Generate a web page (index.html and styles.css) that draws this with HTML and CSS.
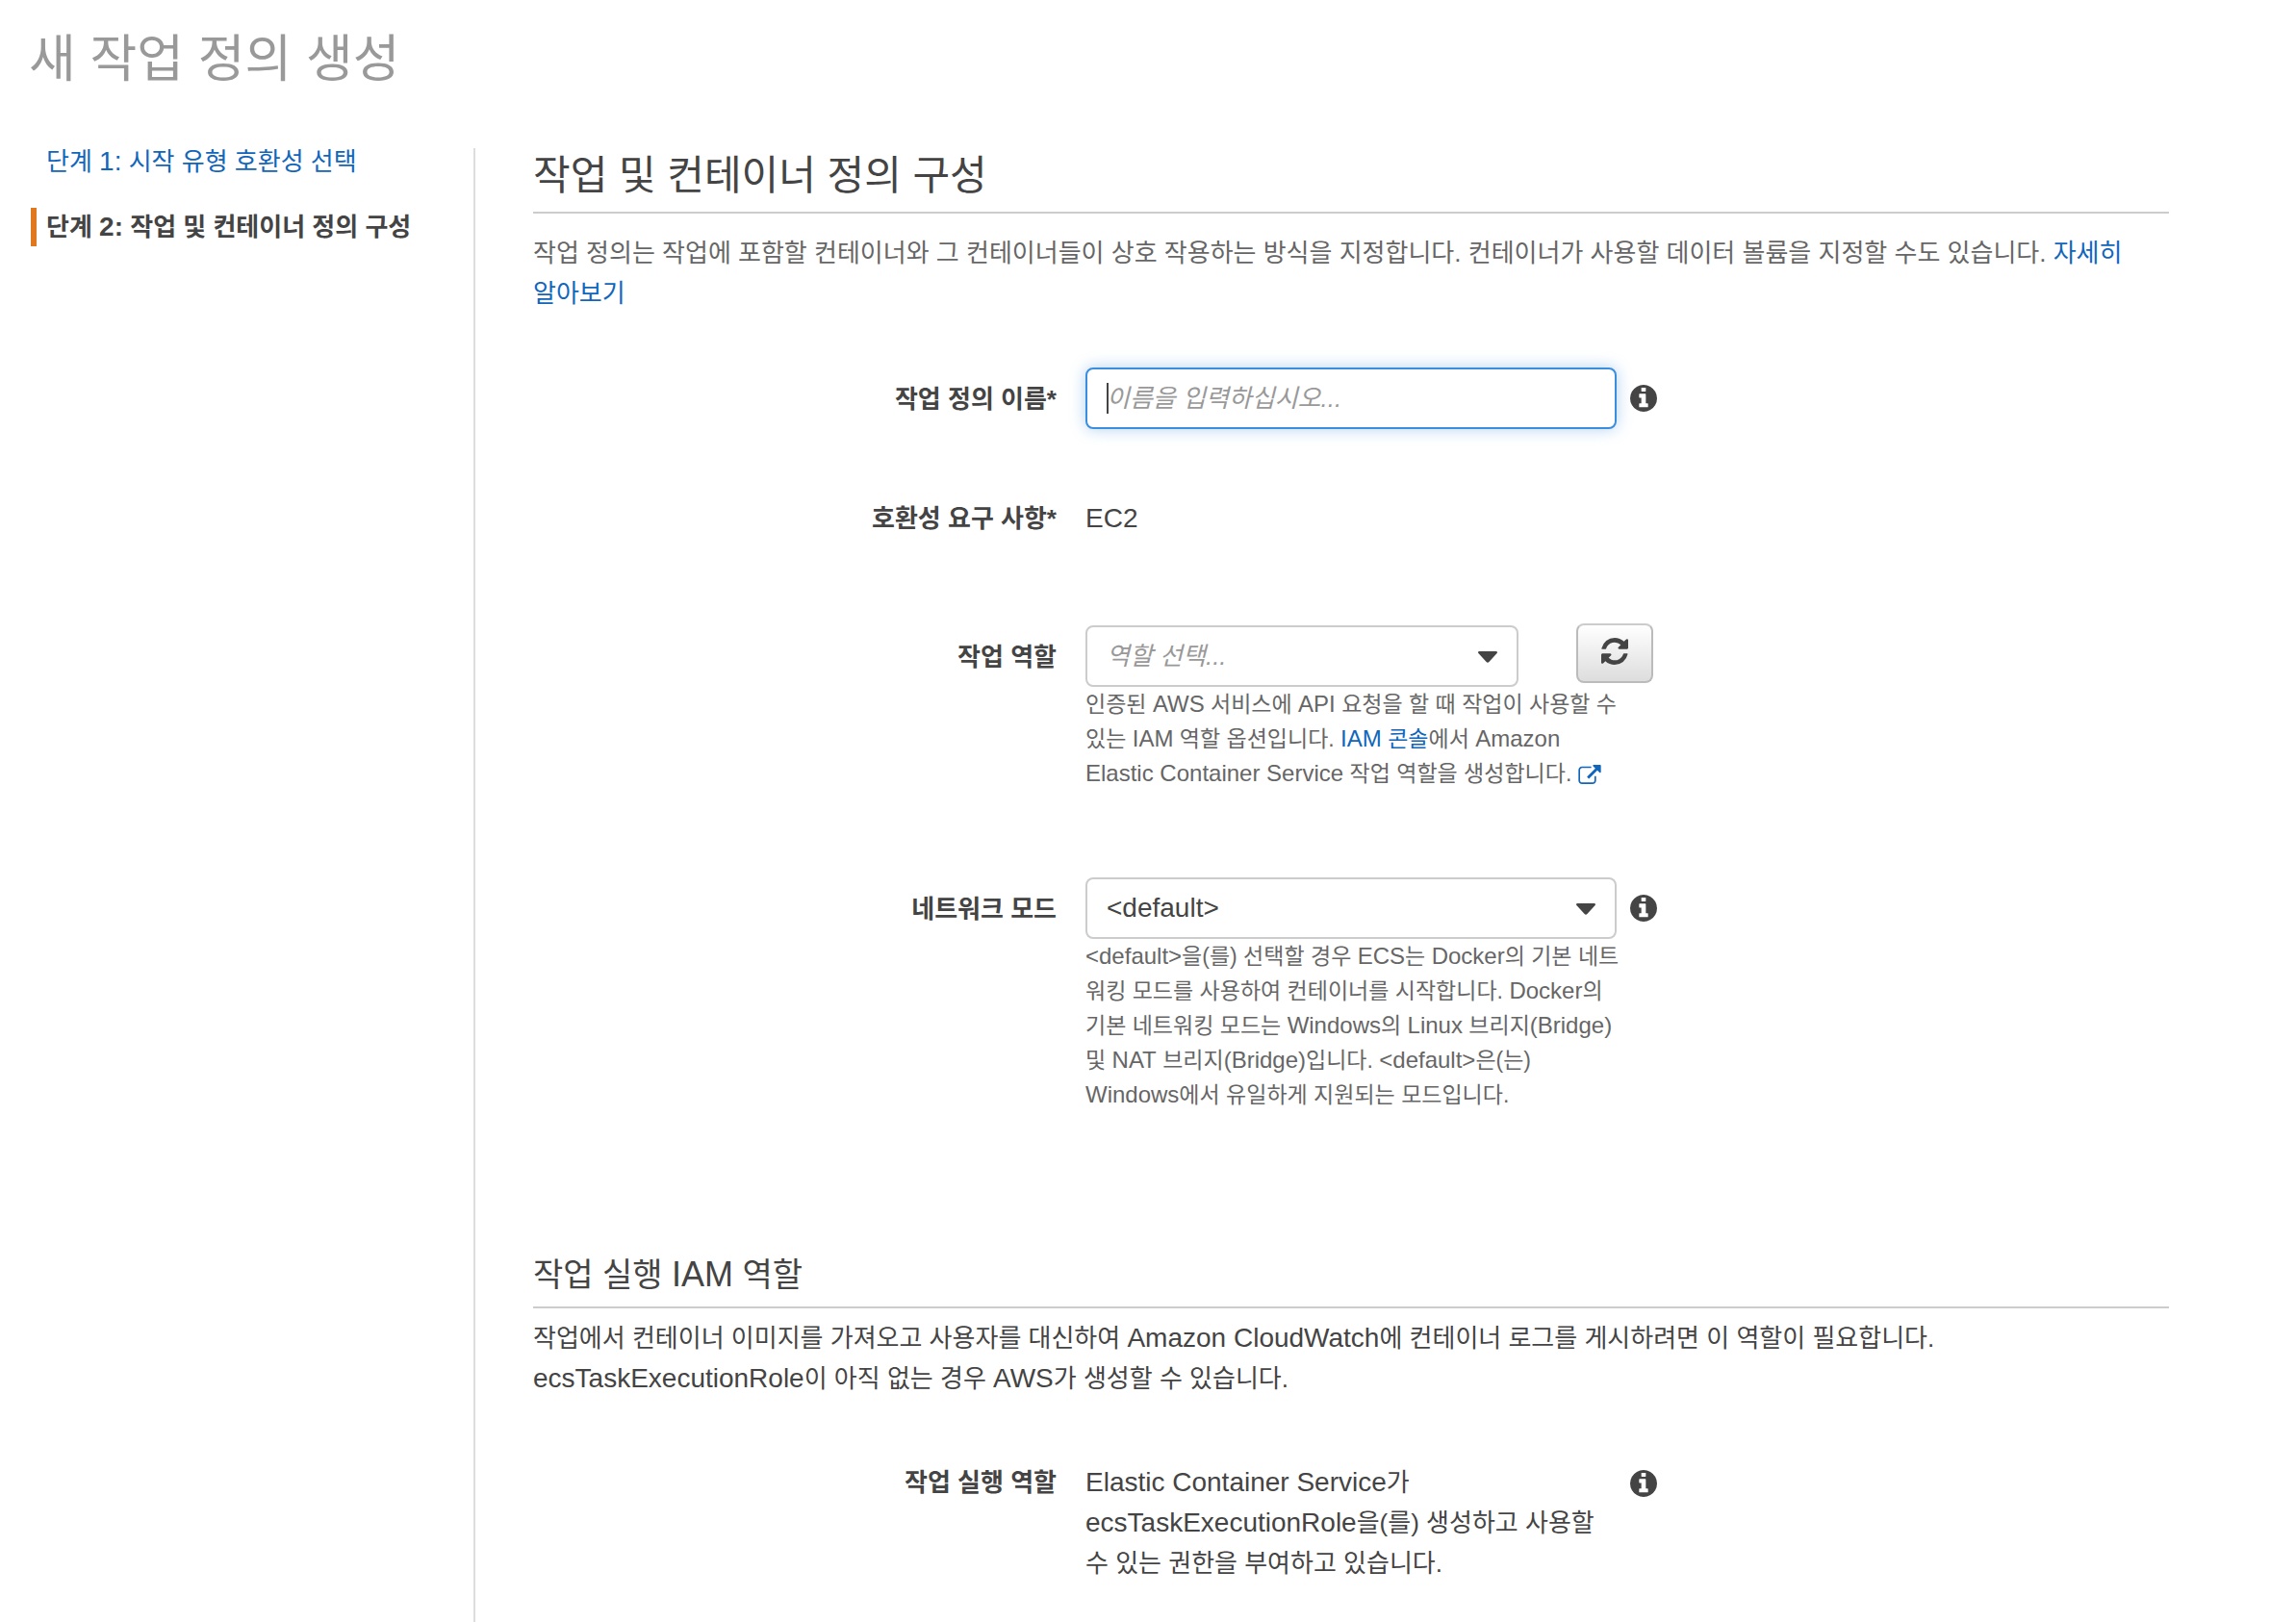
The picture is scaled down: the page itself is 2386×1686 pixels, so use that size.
FILE: index.html
```html
<!DOCTYPE html>
<html lang="ko">
<head>
  <meta charset="utf-8">
  <meta name="viewport" content="width=device-width, initial-scale=1">
  <title>새 작업 정의 생성</title>
  <link rel="stylesheet" href="styles.css">
</head>
<body>
  <svg class="sprite" aria-hidden="true">
    <symbol id="icon-info" viewBox="128 128 1536 1536">
      <path d="M1152 1376v-160q0-14-9-23t-23-9h-96v-512q0-14-9-23t-23-9h-320q-14 0-23 9t-9 23v160q0 14 9 23t23 9h96v320h-96q-14 0-23 9t-9 23v160q0 14 9 23t23 9h448q14 0 23-9t9-23zm-128-896v-160q0-14-9-23t-23-9h-192q-14 0-23 9t-9 23v160q0 14 9 23t23 9h192q14 0 23-9t9-23zm640 416q0 209-103 385.500t-279.500 279.500-385.500 103-385.500-103-279.500-279.500-103-385.500 103-385.500 279.500-279.500 385.500-103 385.500 103 279.500 279.500 103 385.500z"/>
    </symbol>
    <symbol id="icon-refresh" viewBox="0 0 1536 1536">
      <path d="M1511 928q0 5-1 7-64 268-268 434.500t-478 166.500q-146 0-282.500-55t-243.500-157l-129 129q-19 19-45 19t-45-19-19-45v-448q0-26 19-45t45-19h448q26 0 45 19t19 45-19 45l-137 137q71 66 161 102t187 36q134 0 250-65t186-179q11-17 53-117 8-23 30-23h192q13 0 22.500 9.500t9.500 22.500zm25-800v448q0 26-19 45t-45 19h-448q-26 0-45-19t-19-45 19-45l138-138q-148-137-349-137-134 0-250 65t-186 179q-11 17-53 117-8 23-30 23h-199q-13 0-22.500-9.500t-9.500-22.500v-7q65-268 270-434.500t480-166.500q146 0 284 55.500t245 156.500l130-129q19-19 45-19t45 19 19 45z"/>
    </symbol>
    <symbol id="icon-external" viewBox="0 0 1792 1536">
      <path d="M1408 928v320q0 119-84.500 203.500t-203.500 84.500h-832q-119 0-203.500-84.500t-84.500-203.500v-832q0-119 84.500-203.500t203.500-84.500h704q14 0 23 9t9 23v64q0 14-9 23t-23 9h-704q-66 0-113 47t-47 113v832q0 66 47 113t113 47h832q66 0 113-47t47-113v-320q0-14 9-23t23-9h64q14 0 23 9t9 23zm384-864v512q0 26-19 45t-45 19-45-19l-176-176-652 652q-10 10-23 10t-23-10l-114-114q-10-10-10-23t10-23l652-652-176-176q-19-19-19-45t19-45 45-19h512q26 0 45 19t19 45z"/>
    </symbol>
    <symbol id="icon-caret" viewBox="0 0 20 12">
      <path d="M1.500 0h17q1.500 0 1.500 1 0 .7-.6 1.300l-8 8.700q-1.400 1.400-2.800 0l-8-8.700q-.6-.6-.6-1.300 0-1 1.500-1z"/>
    </symbol>
  </svg>

  <div class="page">
    <header class="page-header">
      <h1>새 작업 정의 생성</h1>
    </header>
    <div class="layout">
      <nav class="steps" aria-label="단계">
        <ol>
          <li><a href="#step-1">단계 <span lang="en">1:</span> 시작 유형 호환성 선택</a></li>
          <li class="current" aria-current="step">단계 <span lang="en">2:</span> 작업 및 컨테이너 정의 구성</li>
        </ol>
      </nav>

      <main class="content">
        <form>
          <section class="section">
            <h2>작업 및 컨테이너 정의 구성</h2>
            <p class="intro">작업 정의는 작업에 포함할 컨테이너와 그 컨테이너들이 상호 작용하는 방식을 지정합니다. 컨테이너가 사용할 데이터 볼륨을 지정할 수도 있습니다. <a href="#learn-more">자세히<br>알아보기</a></p>

            <div class="row row-name">
              <label class="row-label" for="task-name">작업 정의 이름*</label>
              <div class="row-body">
                <div class="field">
                  <input class="control active" id="task-name" type="text" placeholder="이름을 입력하십시오...">
                  <span class="text-cursor"></span>
                </div>
                <button class="info" type="button" aria-label="정보"><svg><use href="#icon-info"/></svg></button>
              </div>
            </div>

            <div class="row row-compat">
              <span class="row-label">호환성 요구 사항*</span>
              <div class="row-body"><p class="value"><span lang="en">EC2</span></p></div>
            </div>

            <div class="row row-role">
              <label class="row-label" for="task-role">작업 역할</label>
              <div class="row-body">
                <div class="field narrow">
                  <select class="control placeholder" id="task-role">
                    <option>역할 선택...</option>
                  </select>
                  <svg class="caret"><use href="#icon-caret"/></svg>
                </div>
                <button class="refresh" type="button" aria-label="새로 고침"><svg><use href="#icon-refresh"/></svg></button>
              </div>
              <p class="help">인증된 <span lang="en">AWS</span> 서비스에 <span lang="en">API</span> 요청을 할 때 작업이 사용할 수<br>있는 <span lang="en">IAM</span> 역할 옵션입니다. <a href="#iam"><span lang="en">IAM</span> 콘솔</a>에서 <span lang="en">Amazon</span><br><span lang="en">Elastic Container Service</span> 작업 역할을 생성합니다. <a href="#iam" aria-label="IAM 콘솔 열기"><svg class="external"><use href="#icon-external"/></svg></a></p>
            </div>

            <div class="row row-network">
              <label class="row-label" for="network-mode">네트워크 모드</label>
              <div class="row-body">
                <div class="field">
                  <select class="control latin" id="network-mode">
                    <option>&lt;default&gt;</option>
                  </select>
                  <svg class="caret"><use href="#icon-caret"/></svg>
                </div>
                <button class="info" type="button" aria-label="정보"><svg><use href="#icon-info"/></svg></button>
              </div>
              <p class="help"><span lang="en">&lt;default&gt;</span>을(를) 선택할 경우 <span lang="en">ECS</span>는 <span lang="en">Docker</span>의 기본 네트<br>워킹 모드를 사용하여 컨테이너를 시작합니다. <span lang="en">Docker</span>의<br>기본 네트워킹 모드는 <span lang="en">Windows</span>의 <span lang="en">Linux</span> 브리지<span lang="en">(Bridge)</span><br>및 <span lang="en">NAT</span> 브리지<span lang="en">(Bridge)</span>입니다. <span lang="en">&lt;default&gt;</span>은(는)<br><span lang="en">Windows</span>에서 유일하게 지원되는 모드입니다.</p>
            </div>
          </section>

          <section class="section">
            <h3>작업 실행 <span lang="en">IAM</span> 역할</h3>
            <p class="detail">작업에서 컨테이너 이미지를 가져오고 사용자를 대신하여 <span lang="en">Amazon CloudWatch</span>에 컨테이너 로그를 게시하려면 이 역할이 필요합니다.<br><span lang="en">ecsTaskExecutionRole</span>이 아직 없는 경우 <span lang="en">AWS</span>가 생성할 수 있습니다.</p>

            <div class="row row-exec">
              <span class="row-label">작업 실행 역할</span>
              <div class="row-body">
                <p class="value"><span lang="en">Elastic Container Service</span>가<br><span lang="en">ecsTaskExecutionRole</span>을(를) 생성하고 사용할<br>수 있는 권한을 부여하고 있습니다.</p>
                <button class="info" type="button" aria-label="정보"><svg><use href="#icon-info"/></svg></button>
              </div>
            </div>
          </section>
        </form>
      </main>
    </div>
  </div>
</body>
</html>
```
FILE: styles.css
```css
:root {
  --text: #444;
  --muted: #666;
  --faint: #999;
  --link: #1166bb;
  --line: #ccc;
  --accent: #e07820;
}

* {
  box-sizing: border-box;
}

body {
  margin: 0;
  background: #fff;
  color: var(--text);
  font: 26px/42px "Liberation Sans", "Noto Sans CJK KR", sans-serif;
}

h1, h2, h3, p, ol {
  margin: 0;
  padding: 0;
  font-weight: 400;
}

a {
  color: var(--link);
  text-decoration: none;
}

svg {
  display: block;
  fill: currentColor;
}

.sprite {
  display: none;
}

/* Latin runs are set slightly larger than the Hangul beside them. */
span:lang(en) {
  font-size: 28px;
  line-height: 1;
}

.page {
  display: flex;
  flex-direction: column;
  min-height: 100vh;
}

.page-header {
  padding: 26px 30px 0;
  height: 154px;
}

h1 {
  color: var(--faint);
  font-size: 53px;
  line-height: 72px;
}

.layout {
  display: flex;
  flex: 1;
}

.steps {
  flex: none;
  width: 492px;
  padding-left: 32px;
}

.steps ol {
  display: flex;
  flex-direction: column;
  gap: 28px;
  list-style: none;
}

.steps li {
  padding-left: 10px;
  border-left: 6px solid transparent;
  line-height: 40px;
}

.steps li:first-child {
  margin-top: -6px;
}

.steps .current {
  border-color: var(--accent);
  font-weight: 700;
}

.content {
  flex: 1;
  min-width: 0;
  padding: 0 132px 0 60px;
  border-left: 2px solid #ddd;
}

h2 {
  padding: 2px 0 10px;
  border-bottom: 2px solid var(--line);
  font-size: 42px;
  line-height: 54px;
}

h3 {
  padding-bottom: 12px;
  border-bottom: 2px solid var(--line);
  font-size: 34px;
  line-height: 42px;
}

h3 span:lang(en) {
  font-size: 36px;
}

.intro {
  margin-top: 20px;
  color: var(--muted);
}

.detail {
  margin-top: 10px;
}

.row {
  display: grid;
  grid-template-columns: 32% 1fr;
  column-gap: 30px;
}

.row-name {
  margin-top: 56px;
}

.row-compat {
  margin-top: 72px;
}

.row-role {
  margin-top: 88px;
}

.row-network {
  margin-top: 90px;
  margin-bottom: 148px;
}

.row-exec {
  margin-top: 66px;
}

.row-label {
  padding: 12px 0 10px;
  font-weight: 700;
  text-align: right;
}

.row-role .row-label {
  padding-top: 14px;
}

.row-compat .row-label,
.row-exec .row-label {
  padding: 0;
}

.row-body {
  display: flex;
  align-items: center;
  gap: 14px;
}

.row-role .row-body {
  align-items: flex-end;
  gap: 60px;
}

.row-exec .row-body {
  align-items: flex-start;
}

.field {
  position: relative;
  width: 552px;
}

.field.narrow {
  width: 450px;
}

.control {
  display: block;
  width: 100%;
  height: 64px;
  padding: 0 20px;
  border: 2px solid var(--line);
  border-radius: 8px;
  outline: 0;
  background: #fff;
  color: var(--text);
  font: inherit;
  line-height: 42px;
  appearance: none;
}

.control.latin {
  font-size: 28px;
}

.control.active {
  border-color: #3b8ede;
  box-shadow: 0 0 16px rgba(59, 142, 222, 0.4);
}

.control::placeholder {
  color: var(--faint);
  font-style: italic;
  opacity: 1;
}

.control.placeholder {
  color: var(--faint);
  font-style: italic;
}

.text-cursor {
  position: absolute;
  top: 16px;
  left: 22px;
  width: 2px;
  height: 32px;
  background: var(--text);
}

.caret {
  position: absolute;
  top: 27px;
  right: 22px;
  width: 20px;
  height: 12px;
  pointer-events: none;
}

.info {
  padding: 0;
  border: 0;
  background: none;
  color: var(--text);
}

.info svg {
  width: 28px;
  height: 28px;
}

.row-exec .info {
  margin-top: 8px;
}

.refresh {
  display: flex;
  align-items: center;
  justify-content: center;
  width: 80px;
  height: 62px;
  margin-bottom: 4px;
  padding: 0 0 4px;
  border: 2px solid #bbb;
  border-top-color: #ccc;
  border-radius: 8px;
  background: linear-gradient(#fff, #ddd);
  color: var(--text);
}

.refresh svg {
  width: 28px;
  height: 28px;
}

.help {
  grid-column: 2;
  color: var(--muted);
  font-size: 23px;
  line-height: 36px;
}

.help span:lang(en) {
  font-size: 24px;
}

.value {
  width: 552px;
}

.external {
  display: inline-block;
  width: 24px;
  height: 20px;
  vertical-align: -3px;
}
```
